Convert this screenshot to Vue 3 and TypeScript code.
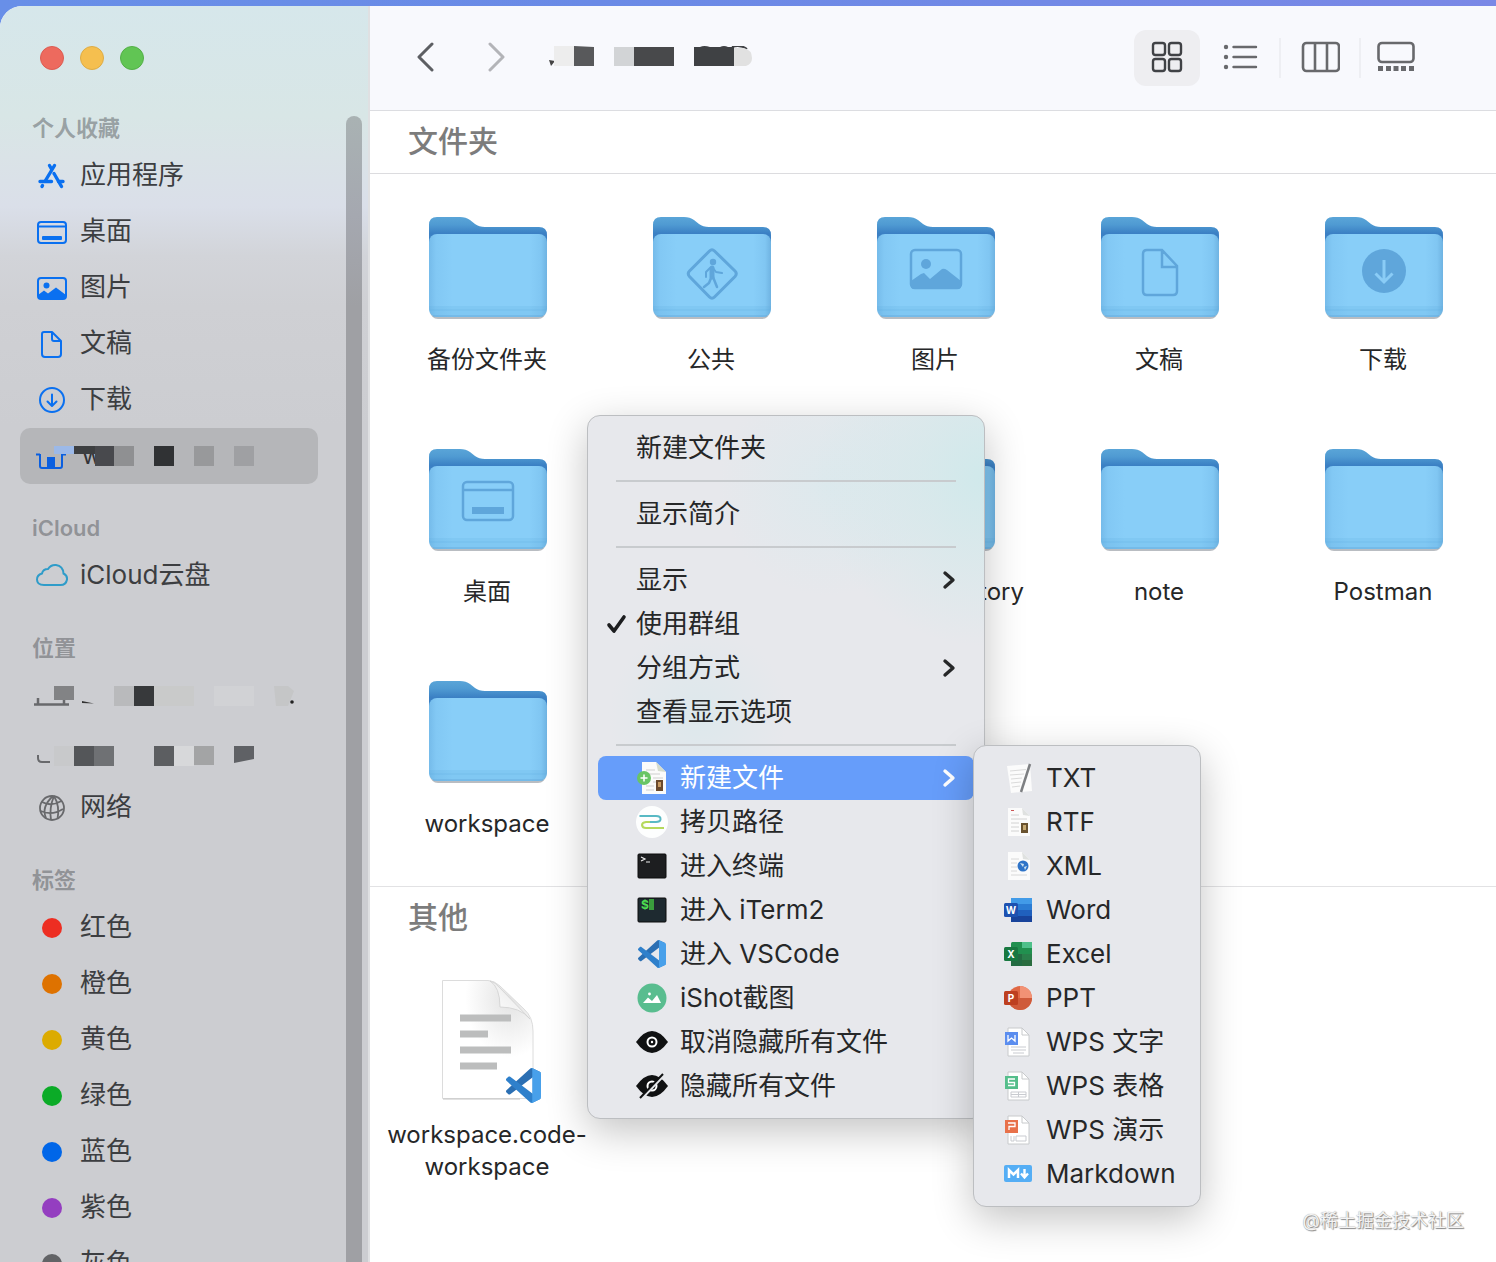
<script setup lang="ts">
interface SideItem {
  label?: string
  icon?: string
  dot?: string
  mosaic?: string
  selected?: boolean
}
interface SideGroup {
  title: string
  items: SideItem[]
}
interface Entry {
  label: string
  glyph?: string
  clipped?: boolean
}
interface MenuRow {
  label?: string
  icon?: string
  checked?: boolean
  submenu?: boolean
  active?: boolean
  separator?: boolean
}

const vscode =
  '<path fill="#2b6fb3" d="M96.4614 10.7962L75.8569 0.875542C73.4719 -0.272773 70.6217 0.211611 68.75 2.08333L1.29858 63.5832C-0.515693 65.2373 -0.513607 68.0937 1.30308 69.7452L6.81272 74.754C8.29793 76.1042 10.5347 76.2036 12.1338 74.9905L93.3609 13.3699C96.086 11.3026 100 13.2462 100 16.6667V16.4275C100 14.0265 98.6246 11.8378 96.4614 10.7962Z"/>' +
  '<path fill="#2f80cb" d="M96.4614 89.2038L75.8569 99.1245C73.4719 100.273 70.6217 99.7884 68.75 97.9167L1.29858 36.4169C-0.515693 34.7627 -0.513607 31.9063 1.30308 30.2548L6.81272 25.246C8.29793 23.8958 10.5347 23.7964 12.1338 25.0095L93.3609 86.6301C96.086 88.6974 100 86.7538 100 83.3333V83.5726C100 85.9735 98.6246 88.1622 96.4614 89.2038Z"/>' +
  '<path fill="#48a0ea" d="M75.8578 99.1263C73.4721 100.274 70.6219 99.7885 68.75 97.9166C71.0564 100.223 75 98.5895 75 95.3278V4.67213C75 1.41039 71.0564 -0.223106 68.75 2.08329C70.6219 0.211402 73.4721 -0.273666 75.8578 0.873633L96.4587 10.7807C98.6234 11.8217 100 14.0112 100 16.4132V83.5871C100 85.9891 98.6234 88.1786 96.4586 89.2196L75.8578 99.1263Z"/>'

const sideIcons: Record<string, string> = {
  apps: '<g stroke="#0a70f0" stroke-width="3.4" stroke-linecap="round" fill="none"><path d="M18.500 5.500L9.500 20.500"/><path d="M13.500 5.500L15.500 9"/><path d="M18 13.500L25.500 26.500"/><path d="M4 21.500H15.500M22.500 21.500H27"/><path d="M6.500 25.500L6 26.500"/></g>',
  desktop: '<g fill="none" stroke="#0a70f0" stroke-width="2"><rect x="2" y="6" width="28" height="21" rx="3"/><path d="M2 10.500H30"/></g><rect x="6" y="20" width="20" height="4" rx="1" fill="#0a70f0"/>',
  pictures: '<rect x="2" y="6" width="28" height="21" rx="3" fill="none" stroke="#0a70f0" stroke-width="2"/><circle cx="10.500" cy="13.500" r="3" fill="#0a70f0"/><path d="M2 23L8 18.500L12 21.500L20 15.500L30 23V25Q30 27 28 27H4Q2 27 2 25Z" fill="#0a70f0"/>',
  document: '<g fill="none" stroke="#0a70f0" stroke-width="2" stroke-linejoin="round"><path d="M8 4H16L25 13V26Q25 29 22 29H9Q6 29 6 26V6Q6 4 8 4Z"/><path d="M16 4V11Q16 13 18 13H25"/></g>',
  download: '<g fill="none" stroke="#0a70f0" stroke-width="2" stroke-linecap="round" stroke-linejoin="round"><circle cx="16" cy="16" r="12"/><path d="M16 10.500V21.500M11.500 17.500L16 22L20.500 17.500"/></g>',
  cloud: '<path d="M8 25Q1 25 1 19.500Q1 15 6 13.500Q7 9 12 9Q15 4.500 20 5Q27 6 27.500 13.500Q31.500 15.500 31 19.500Q30 25 24.500 25Z" fill="none" stroke="#2f9cc9" stroke-width="2"/>',
  globe: '<g fill="none" stroke="#68696c" stroke-width="1.800"><circle cx="16" cy="16" r="12"/><path d="M4.500 19Q16 24 27 17M6 10Q15 15 25.500 9M10 26Q5 15 17 4M15 28Q13 16 18 4M21.500 27Q24 14 18 4"/></g>',
}

const mosaics: Record<string, string> = {
  home: '<path d="M40 454V466Q40 468 42 468H60Q62 468 62 466V454M36 454.500H40M62 454.500H66" fill="none" stroke="#0a5fe0" stroke-width="2"/><rect x="47" y="457" width="8" height="11" fill="#0a5fe0"/><rect x="54" y="446" width="20" height="8" fill="#9cb9e8"/><text x="82" y="464" font-size="24" fill="#333437">w</text><rect x="74" y="446" width="40" height="8" fill="#3d3f41"/><rect x="95" y="446" width="19" height="20" fill="#48494d"/><rect x="114" y="446" width="20" height="20" fill="#8f9092"/><rect x="154" y="446" width="20" height="20" fill="#303234"/><rect x="194" y="446" width="20" height="20" fill="#98999b"/><rect x="234" y="446" width="20" height="20" fill="#9fa0a3"/>',
  disk: '<rect x="54" y="446" width="20" height="14" fill="#828385"/><path d="M34 464.500H69M38 458V464M64 460V464" stroke="#68696c" stroke-width="2.500" fill="none"/><path d="M82 461L94 463.500L82 463Z" fill="#333"/><rect x="114" y="446" width="20" height="20" fill="#b9babc"/><rect x="134" y="446" width="20" height="20" fill="#37393b"/><rect x="154" y="446" width="40" height="20" fill="#c9caca"/><rect x="214" y="446" width="40" height="20" fill="#d1d2d5"/><path d="M274 446H288L294 451L288 466H276Z" fill="#c5c6c7"/><circle cx="292" cy="462" r="1.800" fill="#222"/>',
  remote: '<path d="M38 459V462Q38 466 42 466H50" stroke="#68696c" stroke-width="2" fill="none"/><rect x="54" y="450" width="20" height="20" fill="#c8c9cb"/><rect x="74" y="450" width="20" height="20" fill="#545659"/><rect x="94" y="450" width="20" height="20" fill="#6f7174"/><rect x="154" y="450" width="20" height="20" fill="#5c5e61"/><rect x="174" y="450" width="20" height="20" fill="#d7d8da"/><rect x="194" y="450" width="20" height="19" fill="#a3a4a5"/><path d="M234 450H254V463L234 467Z" fill="#5f6165"/>',
}

const glyphs: Record<string, string> = {
  walk: '<path d="M61.500 47L41.500 67Q39 69.500 41.500 72.500L61.500 93Q64 95.500 66.500 93L87 72.500Q89.500 69.500 87 67L66.500 47Q64 44.500 61.500 47Z" fill="none" stroke="#5fa6db" stroke-width="3"/><circle cx="65" cy="58" r="3.200" fill="#5fa6db"/><g fill="none" stroke="#5fa6db" stroke-linecap="round" stroke-linejoin="round"><path d="M64 64V73" stroke-width="5"/><path d="M62 64L58 68V73M65 64L68 68L74 69" stroke-width="2"/><path d="M63 74L61 79L56 83M65 73L69 83" stroke-width="2.500"/></g>',
  picture: '<rect x="39" y="46" width="50" height="38" rx="4" fill="none" stroke="#5fa6db" stroke-width="2.500"/><circle cx="54" cy="60" r="5" fill="#5fa6db"/><path d="M39 77L49 70L52 69L58 75L70 65Q72 64 75 66L89 77V82Q89 85 86 85H42Q39 85 39 82Z" fill="#5fa6db"/>',
  doc: '<path d="M51 46H66L81 62V87Q81 91 77 91H51Q47 91 47 87V50Q47 46 51 46ZM66 46V63H81" fill="none" stroke="#5fa6db" stroke-width="2.500"/>',
  down: '<circle cx="64" cy="67" r="22" fill="#5fa6db"/><path d="M64 56V77M55.500 69.500L64 78L72.500 69.500" fill="none" stroke="#8accf6" stroke-width="3"/>',
  desk: '<rect x="39" y="46" width="50" height="38" rx="4" fill="none" stroke="#5fa6db" stroke-width="2.500"/><path d="M39 54H89" stroke="#5fa6db" stroke-width="2.500"/><rect x="48" y="71" width="32" height="7" fill="#5fa6db"/>',
}

const menuIcons: Record<string, string> = {
  newfile: '<path d="M6 0H20L30 10V32H6Z" fill="#fbfbfa"/><path d="M20 0L22 9L30 10Z" fill="#d5dccd"/><path d="M10 8H19M10 12H24M17 16H27M17 20H20M10 24H18M10 28H18" stroke="#cfcfcf"/><rect x="20" y="18" width="7" height="11" fill="#6b4a2c"/><path d="M22 20h3v5h-3z" fill="#c79a62"/><circle cx="8" cy="16" r="7" fill="#69c565"/><path d="M8 12.500V19.500M4.500 16H11.500" stroke="#fff" stroke-width="1.500"/>',
  path: '<circle cx="16" cy="16" r="16" fill="#fdfefe"/><path d="M3.500 10H20Q25 10 24.500 13.500Q24 16 20 16H10" fill="none" stroke="#58b9c4" stroke-width="2"/><path d="M14 16H10Q6 16.500 6 19Q6.500 22 10 22H28" fill="none" stroke="#b5d95c" stroke-width="2"/>',
  terminal: '<rect x="2" y="4" width="28" height="24" rx="1" fill="#1d1e20" stroke="#0c0c0d"/><path d="M5 7L9 9L5 11M10 12H14" fill="none" stroke="#eee" stroke-width="1.200"/>',
  iterm: '<rect x="2" y="4" width="28" height="24" rx="1" fill="#1e2a30" stroke="#0c0c0d"/><text x="5" y="15" font-size="12" font-weight="700" fill="#4ddb50">$</text><rect x="13" y="5" width="5" height="11" fill="#3a9e3d"/>',
  vscode: '<g transform="translate(2 2) scale(.28)">' + vscode + '</g>',
  ishot: '<circle cx="16" cy="16" r="14.500" fill="#59bd8f"/><path d="M7 21L12 15.500L16 19L21 13L25 21Z" fill="#fff"/><circle cx="13.500" cy="12" r="1.400" fill="#fff"/>',
  eye: '<path d="M0 16Q8 5 16 5Q24 5 32 16Q24 27 16 27Q8 27 0 16Z" fill="#101112"/><circle cx="16" cy="16" r="5.500" fill="#fff"/><circle cx="16" cy="16" r="3.500" fill="#101112"/><circle cx="16" cy="16" r="1.200" fill="#fff"/>',
  eyeoff: '<path d="M0 16Q8 5 16 5Q24 5 32 16Q24 27 16 27Q8 27 0 16Z" fill="#101112"/><circle cx="16" cy="16" r="4.500" fill="none" stroke="#fff" stroke-width="2"/><path d="M6 28L29 4" stroke="#e6e8ec" stroke-width="3"/><path d="M4 28L27 4" stroke="#101112" stroke-width="2"/>',
  txt: '<path d="M3 4L26 2L28 29L7 31Z" fill="#fbfbfb"/><path d="M6 9L22 7.500M6 13L20 12M7 17L18 16M7 21L17 20M8 25L16 24" stroke="#dadada"/><path d="M26 2L17 30" stroke="#7d7f82" stroke-width="2.500"/>',
  rtf: '<path d="M4 2H18L26 10V30H4Z" fill="#fbfbfb"/><path d="M18 2L19 9L26 10Z" fill="#dfe1e0"/><path d="M7 9H15M7 13H23M7 17H15M7 21H15M7 25H15" stroke="#d2d2d2"/><path d="M7 4.500h3" stroke="#c55"/><rect x="17" y="17" width="7" height="10" fill="#6a532f"/><path d="M19 19h3v5h-3z" fill="#c7aa72"/>',
  xml: '<path d="M4 2H18L26 10V30H4Z" fill="#fbfbfb"/><path d="M18 2L19 9L26 10Z" fill="#dfe1e0"/><path d="M7 9H15M7 13H13M7 17H13M7 21H13M7 25H23" stroke="#d8d8d8"/><circle cx="19" cy="16" r="5.500" fill="#2f74c8"/><path d="M16 13l4 1-1 3zM20 17l3-1-2 4z" fill="#cfe4f2"/>',
  word: '<rect x="7" y="4" width="21" height="24" rx="1.500" fill="#2b7cd3"/><path d="M7 4h21v6H7z" fill="#429be8"/><path d="M7 16h21v6H7z" fill="#2060bd"/><path d="M7 22h21v6H7z" fill="#18439b"/><rect x="0" y="9" width="14" height="14" rx="1.500" fill="#1d51b0"/><text x="7" y="20" text-anchor="middle" font-size="10" font-weight="700" fill="#fff">W</text>',
  excel: '<rect x="7" y="4" width="21" height="24" rx="1.500" fill="#21904f"/><path d="M18 4h10v6H18z" fill="#4fc08a"/><path d="M7 16h11v12H7z" fill="#236b42"/><path d="M18 16h10v6H18z" fill="#2a7f4b"/><path d="M18 22h10v6H18z" fill="#2a6c3f"/><rect x="0" y="9" width="14" height="14" rx="1.500" fill="#187840"/><text x="7" y="20" text-anchor="middle" font-size="10" font-weight="700" fill="#fff">X</text>',
  ppt: '<circle cx="16" cy="16" r="12" fill="#e06743"/><path d="M16 4A12 12 0 0 1 28 16H16Z" fill="#f29275"/><path d="M4 16A12 12 0 0 0 28 16Z" fill="#cf5a3a"/><rect x="0" y="9" width="14" height="14" rx="1.500" fill="#bd3f20"/><text x="7" y="20" text-anchor="middle" font-size="10" font-weight="700" fill="#fff">P</text>',
  wpsw: '<path d="M4 2H18L25 9V30H4Z" fill="#fff" stroke="#c8cacc"/><path d="M18 2V9H25" fill="none" stroke="#c8cacc"/><path d="M7 21H22M7 24H22M9 27H20" stroke="#c9cbd0"/><rect x="1" y="6" width="13" height="13" fill="#5b8def"/><path d="M4 9V15L7.500 12L11 15V9" fill="none" stroke="#fff" stroke-width="1.300"/>',
  wpss: '<path d="M4 2H18L25 9V30H4Z" fill="#fff" stroke="#c8cacc"/><path d="M18 2V9H25" fill="none" stroke="#c8cacc"/><path d="M7 22H22V27H7ZM7 24.500H22M14.500 22V27" fill="none" stroke="#c9cbd0"/><rect x="1" y="6" width="13" height="13" fill="#55be8b"/><path d="M11 9H4.500V12.500H10.500V15.500H4" fill="none" stroke="#fff" stroke-width="1.300"/>',
  wpsp: '<path d="M4 2H18L25 9V30H4Z" fill="#fff" stroke="#c8cacc"/><path d="M18 2V9H25" fill="none" stroke="#c8cacc"/><path d="M7 22V27H10V22M12 22H22V27H12Z" fill="none" stroke="#c9cbd0"/><rect x="1" y="6" width="13" height="13" fill="#e8714a"/><path d="M4 9H11V12.500H5V16" fill="none" stroke="#fff" stroke-width="1.300"/>',
  md: '<rect x="0" y="7" width="28" height="17" rx="2" fill="#55aef5"/><path d="M5 20V12L9.500 16.500L14 12V20" fill="none" stroke="#fff" stroke-width="2.500"/><path d="M20.500 11V18M17 15.500L20.500 19.500L24 15.500" fill="none" stroke="#fff" stroke-width="2.400"/>',
}

const sidebar: SideGroup[] = [
  {
    title: '个人收藏',
    items: [
      { label: '应用程序', icon: 'apps' },
      { label: '桌面', icon: 'desktop' },
      { label: '图片', icon: 'pictures' },
      { label: '文稿', icon: 'document' },
      { label: '下载', icon: 'download' },
      { mosaic: 'home', selected: true },
    ],
  },
  { title: 'iCloud', items: [{ label: 'iCloud云盘', icon: 'cloud' }] },
  { title: '位置', items: [{ mosaic: 'disk' }, { mosaic: 'remote' }, { label: '网络', icon: 'globe' }] },
  {
    title: '标签',
    items: [
      { label: '红色', dot: '#ed2e22' },
      { label: '橙色', dot: '#de7200' },
      { label: '黄色', dot: '#dcab00' },
      { label: '绿色', dot: '#0bab27' },
      { label: '蓝色', dot: '#0066e8' },
      { label: '紫色', dot: '#943ec0' },
      { label: '灰色', dot: '#626366' },
    ],
  },
]

const folders: Entry[] = [
  { label: '备份文件夹' },
  { label: '公共', glyph: 'walk' },
  { label: '图片', glyph: 'picture' },
  { label: '文稿', glyph: 'doc' },
  { label: '下载', glyph: 'down' },
  { label: '桌面', glyph: 'desk' },
  { label: '' },
  { label: 'tory', clipped: true },
  { label: 'note' },
  { label: 'Postman' },
  { label: 'workspace' },
]

const menu: MenuRow[] = [
  { label: '新建文件夹' },
  { separator: true },
  { label: '显示简介' },
  { separator: true },
  { label: '显示', submenu: true },
  { label: '使用群组', checked: true },
  { label: '分组方式', submenu: true },
  { label: '查看显示选项' },
  { separator: true },
  { label: '新建文件', icon: 'newfile', submenu: true, active: true },
  { label: '拷贝路径', icon: 'path' },
  { label: '进入终端', icon: 'terminal' },
  { label: '进入 iTerm2', icon: 'iterm' },
  { label: '进入 VSCode', icon: 'vscode' },
  { label: 'iShot截图', icon: 'ishot' },
  { label: '取消隐藏所有文件', icon: 'eye' },
  { label: '隐藏所有文件', icon: 'eyeoff' },
]

const fileTypes: MenuRow[] = [
  { label: 'TXT', icon: 'txt' },
  { label: 'RTF', icon: 'rtf' },
  { label: 'XML', icon: 'xml' },
  { label: 'Word', icon: 'word' },
  { label: 'Excel', icon: 'excel' },
  { label: 'PPT', icon: 'ppt' },
  { label: 'WPS 文字', icon: 'wpsw' },
  { label: 'WPS 表格', icon: 'wpss' },
  { label: 'WPS 演示', icon: 'wpsp' },
  { label: 'Markdown', icon: 'md' },
]
</script>

<template>
  <div class="screen">
    <svg class="defs" width="0" height="0" aria-hidden="true">
      <defs>
        <linearGradient id="folder-back" x1="0" y1="0" x2="0" y2="1">
          <stop offset="0" stop-color="#5aa5d8" />
          <stop offset=".2" stop-color="#4f9ad2" />
          <stop offset=".42" stop-color="#3b80c4" />
          <stop offset="1" stop-color="#3b80c4" />
        </linearGradient>
        <linearGradient id="folder-front" x1="0" y1="0" x2="1" y2="0">
          <stop offset="0" stop-color="#75bbea" />
          <stop offset=".06" stop-color="#82c8f4" />
          <stop offset=".2" stop-color="#88cef8" />
          <stop offset=".85" stop-color="#88cef8" />
          <stop offset=".95" stop-color="#80c6f2" />
          <stop offset="1" stop-color="#6fb3e2" />
        </linearGradient>
        <linearGradient id="page-fold" x1="0" y1="1" x2="1" y2="0">
          <stop offset="0" stop-color="#ffffff" />
          <stop offset=".5" stop-color="#f2f2f2" />
          <stop offset="1" stop-color="#d2d2d2" />
        </linearGradient>
        <radialGradient id="page-shade" cx=".75" cy=".15" r=".5">
          <stop offset="0" stop-color="#e2e2e2" />
          <stop offset="1" stop-color="#ffffff" />
        </radialGradient>
      </defs>
    </svg>

    <div class="window">
      <aside class="sidebar">
        <div class="lights">
          <button class="light red" aria-label="关闭"></button>
          <button class="light yellow" aria-label="最小化"></button>
          <button class="light green" aria-label="缩放"></button>
        </div>
        <nav>
          <section v-for="group in sidebar" :key="group.title" class="group">
            <h2 class="group-title">{{ group.title }}</h2>
            <ul>
              <li v-for="(item, i) in group.items" :key="i">
                <a href="#" class="side-item" :class="{ selected: item.selected, masked: item.mosaic }">
                  <svg v-if="item.mosaic" width="298" height="56" viewBox="20 428 298 56" v-html="mosaics[item.mosaic]"></svg>
                  <template v-else>
                    <svg v-if="item.icon" width="32" height="32" viewBox="0 0 32 32" v-html="sideIcons[item.icon]"></svg>
                    <svg v-else width="32" height="32" viewBox="0 0 32 32">
                      <circle cx="16" cy="16" r="10" :fill="item.dot" />
                    </svg>
                    <span class="side-label">{{ item.label }}</span>
                  </template>
                </a>
              </li>
            </ul>
          </section>
        </nav>
        <div class="scrollbar"></div>
      </aside>

      <main class="content">
        <header class="toolbar">
          <button class="nav-btn" aria-label="后退">
            <svg width="24" height="32" viewBox="0 0 24 32"><path d="M19 2L6 15L19 28" fill="none" stroke="#5d5f63" stroke-width="3" stroke-linecap="round" stroke-linejoin="round" /></svg>
          </button>
          <button class="nav-btn" aria-label="前进">
            <svg width="24" height="32" viewBox="0 0 24 32"><path d="M5 2L18 15L5 28" fill="none" stroke="#b3b4b8" stroke-width="3" stroke-linecap="round" stroke-linejoin="round" /></svg>
          </button>
          <svg class="path-title" width="208" height="24" viewBox="548 46 208 24">
            <path d="M549 60L555 61L551 66Z" fill="#444" />
            <rect x="554" y="46" width="20" height="20" fill="#ededed" />
            <path d="M574 46L594 47V66H574Z" fill="#58595b" />
            <rect x="614" y="47" width="20" height="19" fill="#d2d4d6" />
            <rect x="634" y="47" width="40" height="19" fill="#48494b" />
            <path d="M694 47H700Q704 45 710 47H720Q724 45 728 47H734V66H694Z" fill="#3f4144" />
            <path d="M732 47Q740 44 747 49" fill="none" stroke="#3f4144" stroke-width="2" />
            <path d="M734 48H744Q752 50 752 58Q752 64 746 66H734Z" fill="#e1e1e1" />
          </svg>
          <div class="views">
            <button class="view-btn on" aria-label="图标">
              <svg width="40" height="40" viewBox="0 0 40 40" fill="none" stroke="#404246" stroke-width="2.400">
                <rect x="6" y="5" width="12" height="12" rx="2.500" /><rect x="22" y="5" width="12" height="12" rx="2.500" />
                <rect x="6" y="21" width="12" height="12" rx="2.500" /><rect x="22" y="21" width="12" height="12" rx="2.500" />
              </svg>
            </button>
            <button class="view-btn" aria-label="列表">
              <svg width="40" height="40" viewBox="0 0 40 40">
                <path d="M13.500 9H36M13.500 19H36M13.500 29H36" stroke="#68696c" stroke-width="2.400" stroke-linecap="round" />
                <g fill="#68696c"><circle cx="6" cy="9" r="2.200" /><circle cx="6" cy="19" r="2.200" /><circle cx="6" cy="29" r="2.200" /></g>
              </svg>
            </button>
            <span class="rule"></span>
            <button class="view-btn" aria-label="分栏">
              <svg width="40" height="40" viewBox="0 0 40 40" fill="none" stroke="#68696c" stroke-width="2.600">
                <rect x="3" y="5" width="36" height="28" rx="3.500" /><path d="M15 5V33M27 5V33" />
              </svg>
            </button>
            <span class="rule"></span>
            <button class="view-btn" aria-label="画廊">
              <svg width="48" height="40" viewBox="0 0 48 40">
                <rect x="2.500" y="5" width="35" height="19" rx="3.500" fill="none" stroke="#68696c" stroke-width="2.600" />
                <path d="M2 30.500h5M10 30.500h5M17.500 30.500h5M25 30.500h5M33 30.500h5" stroke="#68696c" stroke-width="5" />
              </svg>
            </button>
          </div>
        </header>

        <section>
          <h1 class="section-title ruled">文件夹</h1>
          <div class="grid folders">
            <div v-for="(f, i) in folders" :key="i" class="entry">
              <svg width="128" height="128" viewBox="0 0 128 128" aria-hidden="true">
                <rect x="6" y="32" width="116" height="83" rx="8" fill="#b9bdc2" />
                <path d="M5 52V21Q5 13 13 13H36Q42 13 46 16L51 20Q55 23 61 23H115Q123 23 123 31V52Z" fill="url(#folder-back)" />
                <rect x="5" y="30" width="118" height="83" rx="8" fill="url(#folder-front)" />
                <path d="M5 102H123V105Q123 113 115 113H13Q5 113 5 105Z" fill="#5aa5dc" fill-opacity=".16" />
                <path d="M5 106H123" stroke="#5aa5dc" stroke-opacity=".3" />
                <path d="M9 112H119" stroke="#5a9fd2" stroke-opacity=".6" />
                <g v-if="f.glyph" v-html="glyphs[f.glyph]"></g>
              </svg>
              <span class="entry-label" :class="{ clipped: f.clipped }">{{ f.label }}</span>
            </div>
          </div>
        </section>

        <section class="others">
          <h1 class="section-title">其他</h1>
          <div class="grid">
            <div class="entry">
              <svg width="128" height="128" viewBox="0 0 128 128" aria-hidden="true">
                <path d="M18.500 1.500H64Q70 1.500 76 7L100 30Q109 38 109 52V119.500H18.500Z" fill="url(#page-shade)" stroke="#dcdcdc" />
                <path d="M19 120H96" stroke="#c4c4c4" />
                <path d="M66 2Q76 8 76 28Q96 28 106 40L76 9Q71 3 66 2Z" fill="url(#page-fold)" stroke="#d0d0d0" stroke-width=".8" />
                <path d="M36 39H87M36 55H64M36 71H87M36 87H73" stroke="#bcbdbd" stroke-width="7" />
                <g transform="translate(82 89) scale(.35)" v-html="vscode"></g>
              </svg>
              <span class="entry-label">workspace.code-<br />workspace</span>
            </div>
          </div>
        </section>

        <p class="watermark">@稀土掘金技术社区</p>
      </main>
    </div>

    <div class="menu main-menu" role="menu">
      <template v-for="(row, i) in menu" :key="i">
        <hr v-if="row.separator" />
        <button v-else class="menu-row" :class="{ active: row.active }" role="menuitem">
          <span class="mark">
            <svg v-if="row.checked" width="22" height="22" viewBox="0 0 22 22"><path d="M3 12L8 18L18 4" fill="none" stroke="#1c1d1f" stroke-width="3.600" stroke-linecap="round" stroke-linejoin="round" /></svg>
          </span>
          <svg v-if="row.icon" class="menu-icon" width="32" height="32" viewBox="0 0 32 32" v-html="menuIcons[row.icon]"></svg>
          <span class="menu-label">{{ row.label }}</span>
          <svg v-if="row.submenu" width="14" height="20" viewBox="0 0 14 20"><path d="M3 3L11 10L3 17" fill="none" stroke="currentColor" stroke-width="3.400" stroke-linecap="round" stroke-linejoin="round" /></svg>
        </button>
      </template>
    </div>

    <div class="menu sub-menu" role="menu">
      <button v-for="row in fileTypes" :key="row.label" class="menu-row" role="menuitem">
        <svg class="menu-icon" width="28" height="32" viewBox="0 0 28 32" v-html="menuIcons[row.icon ?? '']"></svg>
        <span class="menu-label">{{ row.label }}</span>
      </button>
    </div>
  </div>
</template>

<style>
body {
  margin: 0;
}
</style>

<style scoped>
.screen {
  position: relative;
  box-sizing: border-box;
  height: 100vh;
  padding-top: 6px;
  overflow: hidden;
  background: linear-gradient(90deg, #688fe8, #6a8ae6 40%, #7a88e6);
  font-family: Inter, 'Noto Sans CJK SC', sans-serif;
  color: #262728;
}
.defs {
  position: absolute;
}
button {
  padding: 0;
  border: 0;
  background: none;
  font: inherit;
  color: inherit;
}
svg {
  display: block;
  flex: none;
}
.window {
  display: flex;
  height: 100%;
  border-top-left-radius: 22px;
  overflow: hidden;
  background: #fff;
}
.sidebar {
  position: relative;
  box-sizing: border-box;
  flex: none;
  width: 370px;
  border-right: 2px solid #dfe0e2;
  overflow: hidden;
  background: linear-gradient(180deg, #d6e7eb 0, #d8e6e6 110px, #dae3e7 150px, #dadfe9 200px, #d2d4d9 250px, #cfd0d4 300px, #cccdd1 420px);
}
.lights {
  display: flex;
  gap: 16px;
  padding: 40px 40px 38px;
}
.light {
  width: 24px;
  height: 24px;
  border-radius: 50%;
}
.red {
  background: #ed6a5e;
  border: 1px solid #dc5c52;
}
.yellow {
  background: #f5bf4f;
  border: 1px solid #deac45;
}
.green {
  background: #61c554;
  border: 1px solid #53b047;
}
.group {
  margin-bottom: 24px;
}
.group-title {
  margin: 0;
  padding-left: 32px;
  font-size: 22px;
  line-height: 40px;
  font-weight: 600;
  color: rgba(60, 64, 68, 0.42);
}
ul {
  margin: 0;
  padding: 0;
  list-style: none;
}
.side-item {
  display: flex;
  align-items: center;
  gap: 12px;
  height: 56px;
  margin: 0 50px 0 20px;
  padding-left: 16px;
  border-radius: 10px;
  font-size: 26px;
  color: #3c3e41;
  text-decoration: none;
  white-space: nowrap;
}
.side-label {
  padding-bottom: 2px;
  line-height: 32px;
}
.masked {
  padding-left: 0;
}
.selected {
  background: #b5b6b9;
}
.scrollbar {
  position: absolute;
  top: 110px;
  right: 6px;
  bottom: 0;
  width: 16px;
  border-radius: 8px 8px 0 0;
  background: linear-gradient(180deg, #a9b2b3, #a5a8b0 100px, #9fa0a4 190px);
}
.content {
  position: relative;
  flex: 1;
  min-width: 0;
  overflow: hidden;
}
.toolbar {
  display: flex;
  align-items: center;
  height: 104px;
  padding: 0 66px 0 43px;
  border-bottom: 1px solid #dcdde1;
  background: #f8f9fd;
}
.nav-btn {
  margin-right: 48px;
}
.path-title {
  margin-left: -9px;
}
.views {
  display: flex;
  align-items: center;
  margin-left: auto;
}
.view-btn {
  display: grid;
  place-items: center;
  width: 60px;
  height: 56px;
}
.view-btn.on {
  width: 66px;
  margin-right: 10px;
  border-radius: 12px;
  background: #eeeef1;
}
.rule {
  width: 2px;
  height: 40px;
  margin: 0 9px;
  background: #eeeff3;
}
.section-title {
  margin: 0;
  padding: 0 0 2px 38px;
  font-size: 30px;
  line-height: 60px;
  font-weight: 500;
  color: #7c7c7c;
}
.ruled {
  border-bottom: 1px solid #dcdcdf;
}
.grid {
  display: grid;
  grid-template-columns: repeat(auto-fill, 224px);
  row-gap: 60px;
  padding: 30px 0 0 6px;
}
.folders {
  padding-bottom: 46px;
}
.others {
  border-top: 1px solid #e2e2e4;
}
.entry {
  display: flex;
  flex-direction: column;
  align-items: center;
  gap: 12px;
}
.entry-label {
  min-height: 32px;
  padding-right: 2px;
  font-size: 24px;
  line-height: 32px;
  text-align: center;
}
.clipped {
  align-self: flex-end;
  padding-right: 24px;
}
.watermark {
  position: absolute;
  right: 32px;
  bottom: 27px;
  margin: 0;
  font-size: 18px;
  line-height: 28px;
  color: #f4f4f4;
  text-shadow: 0 0 1px #888, 1px 1px 1px #888;
}
.menu {
  position: absolute;
  box-sizing: border-box;
  padding: 10px;
  border: 1px solid #bcbec1;
  border-radius: 13px;
  background: #e7e8ec;
  box-shadow: 0 12px 40px rgba(0, 0, 0, 0.24);
  font-size: 26px;
}
.main-menu {
  top: 415px;
  left: 587px;
  width: 398px;
  background:
    radial-gradient(circle at 100% 60px, #d0e9eb, transparent 170px),
    radial-gradient(circle at 240px 70px, #dde9ed, transparent 110px),
    radial-gradient(circle at 110px 300px, #dde8ec, transparent 90px),
    #e7e8ec;
}
.sub-menu {
  top: 745px;
  left: 973px;
  width: 228px;
}
.menu-row {
  display: flex;
  align-items: center;
  width: 100%;
  height: 44px;
  border-radius: 8px;
  text-align: left;
  white-space: nowrap;
}
.main-menu .menu-row {
  padding-right: 18px;
}
.sub-menu .menu-row {
  padding-left: 20px;
}
.menu-row.active {
  background: #669dfa;
  color: #fff;
}
.mark {
  flex: none;
  width: 30px;
  padding-left: 8px;
}
.menu-icon {
  margin-right: 12px;
}
.sub-menu .menu-icon {
  margin-right: 14px;
}
.menu-label {
  flex: 1;
  line-height: 32px;
}
hr {
  height: 2px;
  margin: 10px 18px;
  border: 0;
  background: #c8cbce;
}
</style>
